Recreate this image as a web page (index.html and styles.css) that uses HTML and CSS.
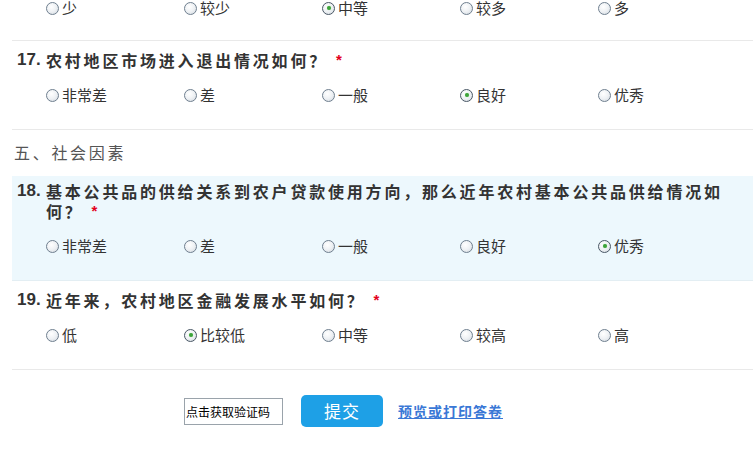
FILE: index.html
```html
<!DOCTYPE html>
<html lang="zh-CN">
<head>
<meta charset="utf-8">
<link rel="stylesheet" href="styles.css">
</head>
<body>
<div class="survey">
  <div class="q partial">
    <div class="opts">
      <label class="opt"><span class="radio"></span>少</label>
      <label class="opt"><span class="radio"></span>较少</label>
      <label class="opt"><span class="radio on"></span>中等</label>
      <label class="opt"><span class="radio"></span>较多</label>
      <label class="opt"><span class="radio"></span>多</label>
    </div>
  </div>

  <div class="q">
    <div class="title"><span class="num">17.</span><span class="txt">农村地区市场进入退出情况如何？<span class="req">*</span></span></div>
    <div class="opts">
      <label class="opt"><span class="radio"></span>非常差</label>
      <label class="opt"><span class="radio"></span>差</label>
      <label class="opt"><span class="radio"></span>一般</label>
      <label class="opt"><span class="radio on"></span>良好</label>
      <label class="opt"><span class="radio"></span>优秀</label>
    </div>
  </div>

  <div class="section">五、社会因素</div>

  <div class="q hl">
    <div class="title"><span class="num">18.</span><span class="txt">基本公共品的供给关系到农户贷款使用方向，那么近年农村基本公共品供给情况如何？<span class="req">*</span></span></div>
    <div class="opts">
      <label class="opt"><span class="radio"></span>非常差</label>
      <label class="opt"><span class="radio"></span>差</label>
      <label class="opt"><span class="radio"></span>一般</label>
      <label class="opt"><span class="radio"></span>良好</label>
      <label class="opt"><span class="radio on"></span>优秀</label>
    </div>
  </div>

  <div class="q">
    <div class="title"><span class="num">19.</span><span class="txt">近年来，农村地区金融发展水平如何？<span class="req">*</span></span></div>
    <div class="opts">
      <label class="opt"><span class="radio"></span>低</label>
      <label class="opt"><span class="radio on"></span>比较低</label>
      <label class="opt"><span class="radio"></span>中等</label>
      <label class="opt"><span class="radio"></span>较高</label>
      <label class="opt"><span class="radio"></span>高</label>
    </div>
  </div>

  <div class="footer">
    <div class="captcha">点击获取验证码</div>
    <div class="submit">提交</div>
    <a class="preview" href="#">预览或打印答卷</a>
  </div>
</div>
</body>
</html>
```

FILE: styles.css
```css
html, body {
  margin: 0;
  padding: 0;
  background: #fff;
}
body {
  font-family: "Noto Sans CJK SC", "Liberation Sans", sans-serif;
  color: #333;
  overflow: hidden;
}
.survey {
  margin-left: 12px;
}
.q {
  padding: 9px 0 24px 0;
  border-bottom: 1px solid #e9e9e9;
}
.q.partial {
  padding-top: 0;
  padding-bottom: 24px;
}
.q.partial .opts {
  height: 16px;
  line-height: 16px;
}
.q.hl {
  background: #edf8fd;
  padding-top: 5px;
  border-bottom-color: #e3eef3;
}
.title {
  display: flex;
  align-items: flex-start;
  padding-left: 5px;
  padding-right: 20px;
  font-size: 16px;
  line-height: 20px;
  font-weight: bold;
  color: #333;
  margin-bottom: 15px;
}
.num {
  flex: none;
  width: 29px;
  height: 20px;
  font-family: "Liberation Sans", Arial, sans-serif;
  font-size: 17px;
  font-weight: bold;
}
.txt {
  flex: 1;
  letter-spacing: 2.8px;
}
.req {
  font-family: "Liberation Sans", Arial, sans-serif;
  color: #e3001b;
  font-size: 15px;
  line-height: 20px;
  vertical-align: top;
  margin-left: 8px;
}
.opts {
  display: grid;
  grid-template-columns: repeat(5, 138px);
  padding-left: 34px;
  height: 20px;
  line-height: 20px;
  font-size: 15px;
  color: #333;
}
.opt {
  display: flex;
  align-items: center;
}
.radio {
  flex: none;
  box-sizing: border-box;
  width: 13px;
  height: 13px;
  border-radius: 50%;
  border: 1px solid #6f7f8f;
  background: radial-gradient(circle at 40% 35%, #ffffff 0%, #eef1f4 50%, #cfd6dd 100%);
  margin-right: 3px;
  position: relative;
}
.radio.on {
  border-color: #4a5866;
}
.radio.on::after {
  content: "";
  position: absolute;
  left: 3.5px;
  top: 3.5px;
  width: 4px;
  height: 4px;
  border-radius: 50%;
  background: #3da33a;
  box-shadow: 0 0 1px #8fd48c;
}
.section {
  padding: 12px 0 14px 2px;
  height: 20px;
  font-size: 16px;
  line-height: 20px;
  letter-spacing: 2.7px;
  color: #555;
}
.footer {
  display: flex;
  align-items: center;
  padding: 25px 0 0 172px;
}
.captcha {
  box-sizing: border-box;
  width: 99px;
  height: 27px;
  border: 1px solid #9aa3ab;
  font-size: 12px;
  line-height: 25px;
  padding-left: 1px;
  color: #000;
  white-space: nowrap;
  overflow: hidden;
}
.submit {
  margin-left: 18px;
  width: 82px;
  height: 32px;
  border-radius: 5px;
  background: #1ea0e6;
  color: #fff;
  font-size: 17px;
  line-height: 32px;
  text-align: center;
  letter-spacing: 1px;
}
.preview {
  margin-left: 15px;
  font-size: 14px;
  font-weight: bold;
  letter-spacing: 1px;
  line-height: 20px;
  color: #3a78d6;
  text-decoration: underline;
}
```
